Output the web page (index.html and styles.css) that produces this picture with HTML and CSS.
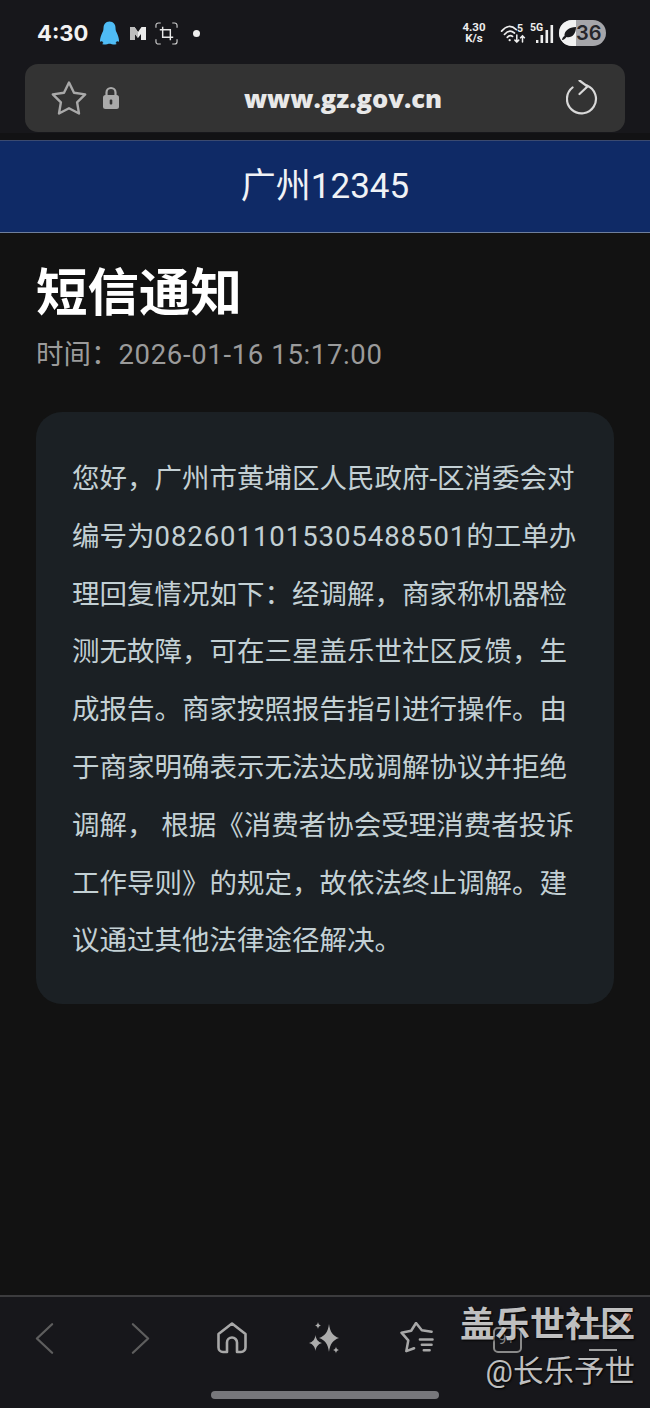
FILE: index.html
```html
<!DOCTYPE html>
<html lang="zh-CN">
<head>
<meta charset="utf-8">
<title>短信通知</title>
<link rel="stylesheet" href="styles.css">
</head>
<body>
<div class="screen">
  <div class="statusbar">
    <div class="status-left">
      <span class="clock">4:30</span>
      <svg class="ic-qq" viewBox="0 0 20 24"><path d="M10 .5C6 .5 4 3.500 4 7 4 10 3 11 2 13.500 1 16 .5 18 .5 20c0 1 1 1 2 0 .5 1 1 1.500 1.500 2-1.500.5-1.500 1.500 1 1.500 2 0 3.500-.5 4-.8h2c.5.3 2 .8 4 .8 2.500 0 2.500-1 1-1.500.5-.5 1-1 1.500-2 1 1 2 1 2 0 0-2-.5-4-1.500-6.500C17 11 16 10 16 7 16 3.500 14 .5 10 .5z" fill="#4fbcf5"/></svg>
      <svg class="ic-m" viewBox="0 0 18 14"><path d="M1 1h4.500L9 6l3.500-5H17v13h-5V8l-3 4-3-4v6H1z" fill="#eaeaea"/><path d="M1 1h4.500L9 6v6L6 8v6H1z" fill="#bdbdbd"/></svg>
      <svg class="ic-crop" viewBox="0 0 24 24" fill="none" stroke="#cfcfcf" stroke-width="1.200"><path d="M1 6V3.500A2.500 2.500 0 0 1 3.500 1H6M18 1h2.500A2.500 2.500 0 0 1 23 3.500V6M23 18v2.500a2.500 2.500 0 0 1-2.500 2.500H18M6 23H3.500A2.500 2.500 0 0 1 1 20.500V18"/><path d="M8 5v11h11M5 8h11v11" stroke="#e8e8e8" stroke-width="1.500"/></svg>
      <span class="dot"></span>
    </div>
    <div class="status-right">
      <span class="speed">4.30<br>K/s</span>
      <svg class="ic-wifi" viewBox="0 0 27 20" fill="none" stroke="#eee" stroke-width="1.800" stroke-linecap="round"><path d="M1.500 7.500Q9-1.500 17 6M4.500 11Q9.500 5 15 9.500M7.500 14Q10.500 11 13 13"/><circle cx="10" cy="17" r="1.200" fill="#eee" stroke="none"/><path d="M17.500 11.500v7.500M15.500 17l2 2 2-2M23.500 19v-6.500M21.500 14.500l2-2 2 2" stroke-width="1.600"/></svg>
      <span class="wifi-num">5</span>
      <span class="signal">
        <span class="net">5G</span>
        <svg class="ic-sig" viewBox="0 0 18 20" fill="#eee"><rect x="0" y="16" width="2.400" height="3"/><rect x="4.500" y="11" width="2.600" height="8"/><rect x="9.500" y="6" width="2.600" height="13"/><rect x="14.500" y="1" width="2.600" height="18"/></svg>
      </span>
      <span class="battery"><span class="batt-left"><svg class="ic-leaf" viewBox="0 0 14 14"><path d="M0 14c0-1.500 1-3 2.500-4C2 5 7 1 14 1 14 8 9.500 12.500 4.500 11 3.500 12.500 2 14 0 14z" fill="#1a1a1d"/></svg></span><span class="batt-num">36</span></span>
    </div>
  </div>

  <div class="urlwrap">
    <div class="urlbar">
      <svg class="ic-star" viewBox="0 0 36 36" fill="none" stroke="#a9a9a9" stroke-width="2.400" stroke-linejoin="round"><path d="M18 2.500l5 10.300 11.200 1.600-8.100 7.900 1.900 11.200-10-5.300-10 5.300 1.900-11.200-8.100-7.900 11.200-1.600z"/></svg>
      <svg class="ic-lock" viewBox="0 0 18 24"><path d="M4.500 10V6.500a4.500 4.500 0 0 1 9 0V10" fill="none" stroke="#aaa" stroke-width="2.200"/><rect x="1" y="9" width="16" height="14" rx="2.500" fill="#aaa"/><rect x="7.700" y="13.500" width="2.600" height="5" rx="1" fill="#333"/></svg>
      <span class="url">www.gz.gov.cn</span>
      <svg class="ic-reload" viewBox="0 0 32 36" fill="none" stroke="#d9d9d9" stroke-width="2.200" stroke-linecap="round" stroke-linejoin="round"><path d="M21 5.500A14.500 14.500 0 1 1 6.500 7.500"/><path d="M13.500 .5L21.500 6.500 13.500 14"/></svg>
    </div>
  </div>

  <header class="sitebar">广州12345</header>

  <main class="content">
    <h1 class="title">短信通知</h1>
    <p class="meta">时间：<span class="meta-num">2026-01-16 15:17:00</span></p>
    <section class="card">
      <p class="msg">您好，广州市黄埔区人民政府-区消委会对编号为<span class="digits">0826011015305488501</span>的工单办理回复情况如下：经调解，商家称机器检测无故障，可在三星盖乐世社区反馈，生成报告。商家按照报告指引进行操作。由于商家明确表示无法达成调解协议并拒绝调解， 根据《消费者协会受理消费者投诉工作导则》的规定，故依法终止调解。建议通过其他法律途径解决。</p>
    </section>
  </main>

  <nav class="navbar">
    <svg class="nav-ic back" viewBox="0 0 20 34" fill="none" stroke="#5e5e5e" stroke-width="2.400" stroke-linecap="round" stroke-linejoin="round"><path d="M18 2L2 17l16 15"/></svg>
    <svg class="nav-ic fwd" viewBox="0 0 20 34" fill="none" stroke="#5e5e5e" stroke-width="2.400" stroke-linecap="round" stroke-linejoin="round"><path d="M2 2l16 15L2 32"/></svg>
    <svg class="nav-ic home" viewBox="0 0 32 32" fill="none" stroke="#a8a8a8" stroke-width="2.600" stroke-linejoin="round"><path d="M16 1.500L2.500 12v13.500a4.500 4.500 0 0 0 4.500 4.500h4V20.500a5 5 0 0 1 10 0V30h4a4.500 4.500 0 0 0 4.500-4.500V12z"/></svg>
    <svg class="nav-ic spark" viewBox="0 0 32 32" fill="#ababab"><path d="M20 2C21 10 24 14 30 16 24 18 21 22 20 30 19 22 16 18 10 16 16 14 19 10 20 2z"/><path d="M6.500 13C7 17 9 20 13 21 9 22 7 25 6.500 29 6 25 4 22 0 21 4 20 6 17 6.500 13z"/><path d="M9 0c.3 2 1 3 3 3.500-2 .5-2.700 1.500-3 3.500-.3-2-1-3-3-3.500 2-.5 2.700-1.500 3-3.500z"/><path d="M27 24.500c.2 2 1 3 3 3.500-2 .5-2.800 1.500-3 3.500-.2-2-1-3-3-3.500 2-.5 2.800-1.500 3-3.500z"/></svg>
    <svg class="nav-ic bookmarks" viewBox="0 0 36 34" fill="none" stroke="#a8a8a8" stroke-width="2.600" stroke-linecap="round" stroke-linejoin="round"><path d="M33 10l-10-1.500L17 1l-5 8L2 11l7 8-2 11 8-3"/><path d="M21 18h13M23 23.500h10M25 29h6"/></svg>
    <svg class="nav-ic tabs" viewBox="0 0 29 26" fill="none" stroke="#8a8a8a" stroke-width="2"><rect x="1" y="1" width="27" height="24" rx="4"/></svg>
    <span class="menu-line menu-top"></span>
    <span class="menu-line"></span>
    <span class="notice"></span>
    <span class="tabcount">9+</span>
    <div class="homebar"></div>
    <div class="watermark"><span class="wm-name">盖乐世社区</span><span class="wm-user">@长乐予世</span></div>
  </nav>
</div>
</body>
</html>
```
FILE: styles.css
```css
* { box-sizing: border-box; margin: 0; padding: 0; }
html, body { background: #121212; }
body { width: 650px; height: 1408px; overflow: hidden; font-family: Roboto, "Noto Sans CJK SC", sans-serif; }
.screen { width: 650px; height: 1408px; display: flex; flex-direction: column; background: #121212; }

.statusbar { height: 64px; background: #17171b; display: flex; justify-content: space-between; align-items: flex-start; padding: 20px 44px 0 37px; flex: none; }
.status-left { display: flex; align-items: center; height: 26px; }
.clock { font: 700 22px/26px Inter, Roboto, sans-serif; color: #f2f2f2; width: 62px; }
.ic-qq { width: 21px; height: 24px; display: block; }
.ic-m { width: 18px; height: 14px; margin-left: 9px; display: block; }
.ic-crop { width: 23px; height: 23px; margin-left: 8px; display: block; }
.dot { width: 7px; height: 7px; border-radius: 50%; background: #eee; margin-left: 15px; }
.status-right { display: flex; align-items: center; height: 26px; position: relative; }
.speed { font: 700 11.5px/11px Roboto, sans-serif; color: #eee; text-align: center; width: 28px; margin-right: 12px; }
.ic-wifi { width: 26px; height: 19px; display: block; }
.wifi-num { position: absolute; left: 57px; top: 4px; font: 700 10.5px/10px Roboto, sans-serif; color: #eee; }
.signal { position: relative; width: 24px; height: 22px; margin-left: 4px; }
.net { position: absolute; left: 0; top: 1px; font: 700 10.5px/10px Roboto, sans-serif; color: #eee; }
.ic-sig { position: absolute; right: 0; top: 2px; width: 18px; height: 20px; }
.battery { display: flex; width: 47px; height: 26px; margin-left: 5px; border-radius: 13px; overflow: hidden; background: #a6a6aa; }
.batt-left { width: 17px; background: #f2f2f2; display: flex; align-items: center; justify-content: flex-end; flex: none; }
.ic-leaf { width: 14px; height: 14px; display: block; }
.batt-num { font: 600 20px/26px Inter, Roboto, sans-serif; color: #26262a; }

.urlwrap { height: 76px; padding: 0 25px 8px; background: #17171b; flex: none; border-bottom: 7px solid #121214; }
.urlbar { height: 68px; background: #333333; border-radius: 13px; display: flex; align-items: center; padding: 0 27px 0 26px; position: relative; }
.ic-star { width: 36px; height: 36px; display: block; }
.ic-lock { width: 18px; height: 24px; margin-left: 15px; display: block; }
.url { position: absolute; left: 36px; right: 0; top: 0; text-align: center; font: 800 25.5px/68px "Open Sans", "Noto Sans", sans-serif; color: #e8e8e8; }
.ic-reload { width: 32px; height: 36px; margin-left: auto; display: block; }

.sitebar { height: 93px; flex: none; background: #0f2a66; border-top: 1px solid #3b4a70; border-bottom: 1px solid #6f7f9c; color: #f0f2f6; text-align: center; font-size: 35px; line-height: 92px; font-family: Roboto, "Noto Sans CJK SC", sans-serif; }

.content { flex: 1; padding: 0 36px; background: #121212; }
.title { font: 700 51.5px/74px "Noto Sans CJK SC", sans-serif; color: #fff; margin-top: 19px; }
.meta { font: 400 27.5px/40px Roboto, "Noto Sans CJK SC", sans-serif; color: #9b9b9b; margin-top: 9px; }
.meta-num { letter-spacing: .65px; }
.card { margin-top: 37px; height: 592px; background: #1b2024; border-radius: 26px; padding: 38px 36px; }
.msg { font: 400 27.5px/57.8px Roboto, "Noto Sans CJK SC", sans-serif; color: #c3d0d4; word-break: break-all; }
.digits { letter-spacing: .95px; }

.navbar { height: 113px; flex: none; background: #17171b; border-top: 2px solid #3c3c3e; position: relative; }
.nav-ic { position: absolute; display: block; }
.back { left: 35px; top: 25px; width: 19px; height: 33px; }
.fwd { left: 131px; top: 25px; width: 19px; height: 33px; }
.home { left: 216px; top: 25px; width: 32px; height: 32px; }
.spark { left: 309px; top: 25px; width: 32px; height: 32px; }
.bookmarks { left: 399px; top: 25px; width: 36px; height: 33px; }
.tabs { left: 493px; top: 30px; width: 29px; height: 26px; }
.tabcount { position: absolute; left: 498px; top: 33px; font: 400 15px/18px Roboto, sans-serif; color: #8a8a8a; }
.menu-line { position: absolute; left: 589px; top: 52px; width: 28px; height: 2px; background: #a0a0a0; }
.menu-top { top: 28px; }
.notice { position: absolute; left: 623px; top: 16px; width: 8px; height: 8px; border-radius: 50%; background: #e8806a; }
.homebar { position: absolute; left: 211px; top: 94px; width: 228px; height: 8px; border-radius: 4px; background: #77777b; }
.watermark { position: absolute; right: 15px; top: 2px; display: flex; flex-direction: column; align-items: flex-end; text-shadow: 1px 1px 2px #000; }
.wm-name { font: 700 35px/46px "Noto Sans CJK SC", sans-serif; color: rgba(235,235,235,.82); }
.wm-user { font: 400 30.5px/36px Roboto, "Noto Sans CJK SC", sans-serif; color: rgba(225,225,225,.85); margin-top: 9px; }
```
